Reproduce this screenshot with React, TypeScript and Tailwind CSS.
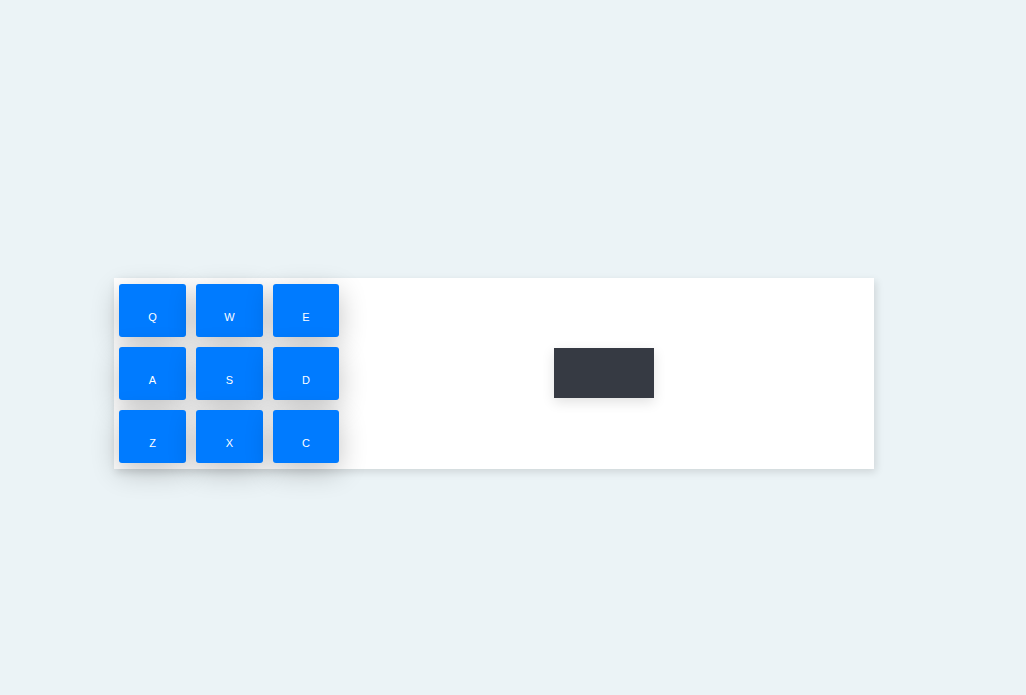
import React from "react";

const keys = ["Q", "W", "E", "A", "S", "D", "Z", "X", "C"];

export default function App() {
  return (
    <div className="min-h-[695px] w-full bg-[#ebf3f6] pt-[278px] pl-[114px]" style={{ fontFamily: "'Liberation Sans', Arial, sans-serif" }}>
      <div className="flex h-[191px] w-[760px] bg-white shadow-[2px_3px_8px_rgba(0,0,0,0.12)]">
        <div className="grid w-[230px] content-start grid-cols-[67px_67px_66px] grid-rows-[53px_53px_53px] gap-x-[10px] gap-y-[10px] pl-[5px] pt-[6px]">
          {keys.map((k) => (
            <div
              key={k}
              className="flex h-[53px] items-end justify-center rounded-[3px] bg-[#007bff] pb-[14px] text-[11px] leading-none text-white shadow-[0_8px_28px_rgba(0,0,0,0.24)]"
            >
              {k}
            </div>
          ))}
        </div>
        <div className="flex flex-1 items-center justify-center pr-[10px] pb-[2px]">
          <div className="h-[50px] w-[100px] bg-[#363a43] shadow-[0_4px_12px_rgba(0,0,0,0.12)]" />
        </div>
      </div>
    </div>
  );
}
